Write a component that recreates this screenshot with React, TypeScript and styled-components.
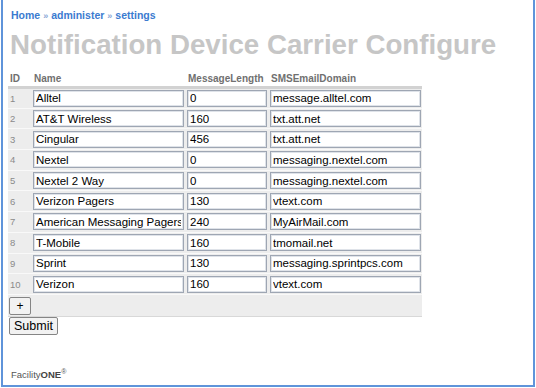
import * as React from 'react'
import styled, { createGlobalStyle } from 'styled-components'

interface ICarrier {
  id: number
  name: string
  messageLength: string
  domain: string
}

const CARRIERS: ICarrier[] = [
  { id: 1, name: 'Alltel', messageLength: '0', domain: 'message.alltel.com' },
  { id: 2, name: 'AT&T Wireless', messageLength: '160', domain: 'txt.att.net' },
  { id: 3, name: 'Cingular', messageLength: '456', domain: 'txt.att.net' },
  { id: 4, name: 'Nextel', messageLength: '0', domain: 'messaging.nextel.com' },
  { id: 5, name: 'Nextel 2 Way', messageLength: '0', domain: 'messaging.nextel.com' },
  { id: 6, name: 'Verizon Pagers', messageLength: '130', domain: 'vtext.com' },
  { id: 7, name: 'American Messaging Pagers', messageLength: '240', domain: 'MyAirMail.com' },
  { id: 8, name: 'T-Mobile', messageLength: '160', domain: 'tmomail.net' },
  { id: 9, name: 'Sprint', messageLength: '130', domain: 'messaging.sprintpcs.com' },
  { id: 10, name: 'Verizon', messageLength: '160', domain: 'vtext.com' },
]

const GlobalStyle = createGlobalStyle`
  body {
    margin: 0;
    background: #fff;
    font-family: "Liberation Sans", Arial, sans-serif;
  }
`

const App = () => {
  return (
    <>
      <GlobalStyle />
      <Frame>
        <Breadcrumb>
          <Crumb>Home</Crumb>
          <Sep>»</Sep>
          <Crumb>administer</Crumb>
          <Sep>»</Sep>
          <Crumb>settings</Crumb>
        </Breadcrumb>
        <Title>Notification Device Carrier Configure</Title>
        <Table>
          <colgroup>
            <col style={{ width: 24 }} />
            <col style={{ width: 154 }} />
            <col style={{ width: 83 }} />
            <col style={{ width: 153 }} />
          </colgroup>
          <thead>
            <tr>
              <HeadCell>ID</HeadCell>
              <HeadCell>Name</HeadCell>
              <HeadCell>MessageLength</HeadCell>
              <HeadCell>SMSEmailDomain</HeadCell>
            </tr>
          </thead>
          <tbody>
            {CARRIERS.map(c => (
              <Row key={c.id}>
                <IdCell>{c.id}</IdCell>
                <Cell>
                  <TextInput wide defaultValue={c.name} />
                </Cell>
                <Cell>
                  <TextInput defaultValue={c.messageLength} />
                </Cell>
                <Cell>
                  <TextInput wide defaultValue={c.domain} />
                </Cell>
              </Row>
            ))}
            <AddRow>
              <AddCell colSpan={4}>
                <Button type="button">+</Button>
              </AddCell>
            </AddRow>
          </tbody>
        </Table>
        <SubmitButton type="submit">Submit</SubmitButton>
        <Footer>
          Facility<b>ONE</b>
          <sup>®</sup>
        </Footer>
      </Frame>
    </>
  )
}

const Frame = styled.div`
  box-sizing: border-box;
  width: 534px;
  height: 387px;
  margin-left: 1px;
  border: 2px solid #5f94da;
  border-top: none;
  padding: 9px 0 0 5px;
  display: flex;
  flex-direction: column;
`

const Breadcrumb = styled.div`
  display: flex;
  align-items: baseline;
  gap: 3px;
  padding-left: 3px;
  font-size: 10.5px;
  line-height: 13px;
  font-weight: bold;
  color: #3b7bd0;
`

const Crumb = styled.span``

const Sep = styled.span`
  font-size: 9px;
  color: #8aa9d6;
`

const Title = styled.h1`
  margin: 6px 0 0 2px;
  font-size: 27.7px;
  line-height: 32px;
  font-weight: bold;
  color: #c6c6c6;
  white-space: nowrap;
`

const Table = styled.table`
  margin-top: 12px;
  width: 414px;
  table-layout: fixed;
  border-collapse: collapse;
`

const HeadCell = styled.th`
  text-align: left;
  padding: 0 2px 2px;
  font-size: 10px;
  line-height: 11px;
  font-weight: bold;
  color: #707070;
  border-bottom: 3px solid #d2d2d2;
  white-space: nowrap;
`

const Row = styled.tr`
  height: 20.7px;
  background: #ededed;
`

const Cell = styled.td`
  padding: 0;
  border-bottom: 1px solid #f9f9f9;
  vertical-align: middle;
`

const IdCell = styled(Cell)`
  padding-left: 2px;
  font-size: 9.5px;
  color: #8a8a8a;
`

const TextInput = styled.input<{ wide?: boolean }>`
  display: block;
  box-sizing: border-box;
  width: ${props => (props.wide ? '151px' : '80px')};
  height: 17px;
  margin-left: 1px;
  padding: 0 2px;
  border: 1px solid #9ea6b3;
  box-shadow: inset 0 0 0 1px #dfe3e9;
  background: #fff;
  font-family: "Liberation Sans", Arial, sans-serif;
  font-size: 11.5px;
  color: #000;
  outline: none;
`

const AddRow = styled.tr`
  background: #ededed;
`

const AddCell = styled.td`
  padding: 1px 0 1px 1px;
  border-bottom: 1px solid #d8d8d8;
`

const Button = styled.button`
  box-sizing: border-box;
  height: 18px;
  min-width: 22px;
  padding: 0 5px;
  border: 1px solid #858585;
  border-radius: 2px;
  background: #f2f2f2;
  font-family: "Liberation Sans", Arial, sans-serif;
  font-size: 12px;
  line-height: 14px;
  color: #000;
`

const SubmitButton = styled(Button)`
  align-self: flex-start;
  margin: 0 0 0 1px;
  height: 18px;
  padding: 0 4px;
  font-size: 12.5px;
`

const Footer = styled.div`
  margin-top: auto;
  margin-bottom: 5px;
  padding-left: 3px;
  font-size: 9.5px;
  color: #555;
  b {
    color: #444;
  }
  sup {
    font-size: 7px;
  }
`

export default App
